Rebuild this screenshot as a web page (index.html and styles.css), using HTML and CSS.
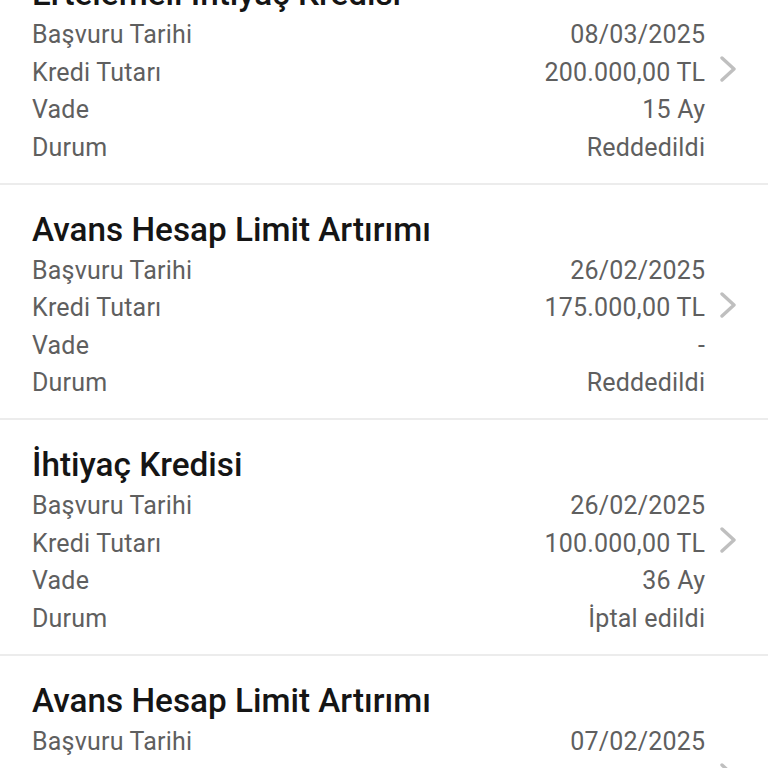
FILE: index.html
```html
<!DOCTYPE html>
<html lang="tr">
<head>
<meta charset="utf-8">
<title>Başvurularım</title>
<link rel="stylesheet" href="styles.css">
</head>
<body>
<div class="list">
  <div class="card">
    <div class="content">
      <div class="title">Ertelemeli İhtiyaç Kredisi</div>
      <div class="row"><span>Başvuru Tarihi</span><span>08/03/2025</span></div>
      <div class="row"><span>Kredi Tutarı</span><span>200.000,00 TL</span></div>
      <div class="row"><span>Vade</span><span>15 Ay</span></div>
      <div class="row"><span>Durum</span><span>Reddedildi</span></div>
    </div>
    <svg class="chev" viewBox="0 0 16 26" width="16" height="26"><polyline points="2,2 14,13 2,24"/></svg>
  </div>
  <div class="card">
    <div class="content">
      <div class="title">Avans Hesap Limit Artırımı</div>
      <div class="row"><span>Başvuru Tarihi</span><span>26/02/2025</span></div>
      <div class="row"><span>Kredi Tutarı</span><span>175.000,00 TL</span></div>
      <div class="row"><span>Vade</span><span>-</span></div>
      <div class="row"><span>Durum</span><span>Reddedildi</span></div>
    </div>
    <svg class="chev" viewBox="0 0 16 26" width="16" height="26"><polyline points="2,2 14,13 2,24"/></svg>
  </div>
  <div class="card">
    <div class="content">
      <div class="title">İhtiyaç Kredisi</div>
      <div class="row"><span>Başvuru Tarihi</span><span>26/02/2025</span></div>
      <div class="row"><span>Kredi Tutarı</span><span>100.000,00 TL</span></div>
      <div class="row"><span>Vade</span><span>36 Ay</span></div>
      <div class="row"><span>Durum</span><span>İptal edildi</span></div>
    </div>
    <svg class="chev" viewBox="0 0 16 26" width="16" height="26"><polyline points="2,2 14,13 2,24"/></svg>
  </div>
  <div class="card">
    <div class="content">
      <div class="title">Avans Hesap Limit Artırımı</div>
      <div class="row"><span>Başvuru Tarihi</span><span>07/02/2025</span></div>
      <div class="row"><span>Kredi Tutarı</span><span>200.000,00 TL</span></div>
      <div class="row"><span>Vade</span><span>-</span></div>
      <div class="row"><span>Durum</span><span>Reddedildi</span></div>
    </div>
    <svg class="chev" viewBox="0 0 16 26" width="16" height="26"><polyline points="2,2 14,13 2,24"/></svg>
  </div>
</div>
</body>
</html>
```
FILE: styles.css
```css
html, body {
  margin: 0;
  padding: 0;
  background: #ffffff;
  overflow: hidden;
  height: 768px;
}
body {
  font-family: Roboto, "Noto Sans", "Liberation Sans", sans-serif;
}
.list {
  margin-top: -53px;
}
.card {
  display: flex;
  align-items: center;
  gap: 15px;
  border-top: 2px solid #ececec;
  padding: 23px 32px 16.5px 32px;
}
.content {
  flex: 1;
}
.title {
  font-size: 33.3px;
  font-weight: 500;
  line-height: 44px;
  color: #151515;
}
.row {
  display: flex;
  justify-content: space-between;
  font-size: 25px;
  letter-spacing: 0.2px;
  line-height: 37.5px;
  color: #5f5f5f;
}
.row span:last-child {
  margin-right: -0.2px;
}
.chev {
  flex: none;
  fill: none;
  stroke: #bfbfbf;
  stroke-width: 3.4;
  stroke-linecap: round;
  stroke-linejoin: round;
}
```
